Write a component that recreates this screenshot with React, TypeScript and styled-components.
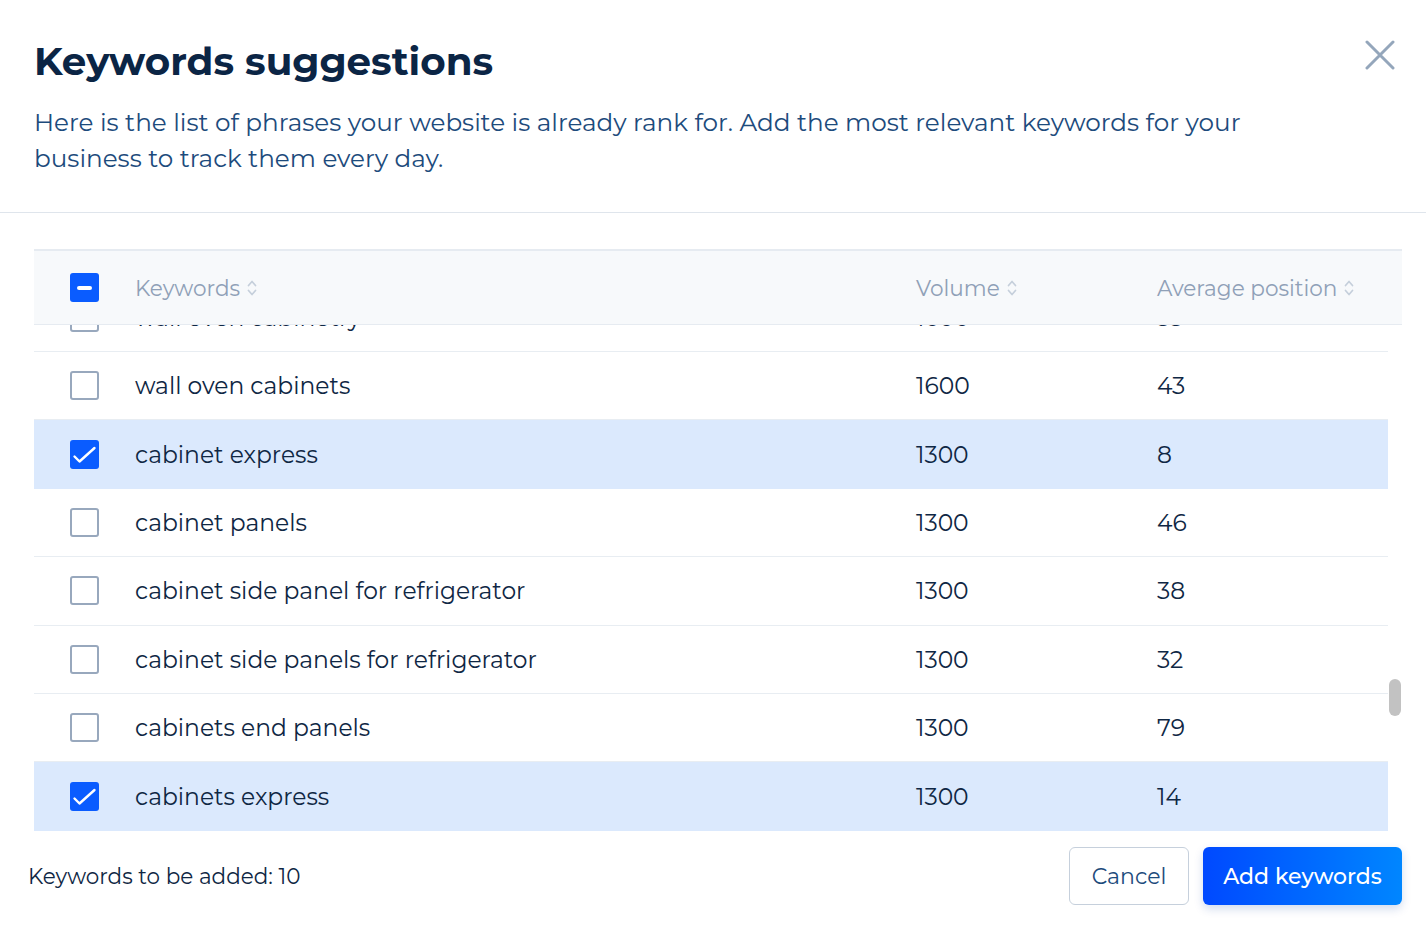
import React, { useLayoutEffect, useRef, useState } from 'react';
import styled, { createGlobalStyle } from 'styled-components';

type TRow = {
  keyword: string;
  volume: number;
  position: number;
  checked?: boolean;
};

const filler = [
  'kitchen cabinets',
  'cabinet doors',
  'kitchen cabinet doors',
  'bathroom cabinets',
  'cabinet hardware',
  'cabinet makers',
  'custom cabinets',
  'cabinet refacing',
  'cabinet knobs',
  'white kitchen cabinets',
];

const visibleRows: TRow[] = [
  { keyword: 'wall oven cabinetry', volume: 1600, position: 33 },
  { keyword: 'wall oven cabinets', volume: 1600, position: 43 },
  { keyword: 'cabinet express', volume: 1300, position: 8, checked: true },
  { keyword: 'cabinet panels', volume: 1300, position: 46 },
  { keyword: 'cabinet side panel for refrigerator', volume: 1300, position: 38 },
  { keyword: 'cabinet side panels for refrigerator', volume: 1300, position: 32 },
  { keyword: 'cabinets end panels', volume: 1300, position: 79 },
  { keyword: 'cabinets express', volume: 1300, position: 14, checked: true },
];

const BEFORE = 70;

const rows: TRow[] = [
  ...Array.from({ length: BEFORE }, (_, i) => ({
    keyword: `${filler[i % filler.length]} ${i + 1}`,
    volume: 9900 - i * 100,
    position: (i * 7) % 90 + 1,
    checked: i % 9 === 0,
  })),
  ...visibleRows,
  ...Array.from({ length: 23 }, (_, i) => ({
    keyword: `${filler[(i + 3) % filler.length]} ideas`,
    volume: 1000 - i * 20,
    position: (i * 11) % 90 + 1,
  })),
];

const SortIcon = () => (
  <svg width="10" height="20" viewBox="0 0 10 20" fill="none">
    <path d="M1.5 7.5 L5 3.5 L8.5 7.5" stroke="#c5cfdb" strokeWidth="1.7" strokeLinecap="round" strokeLinejoin="round" />
    <path d="M1.5 12.5 L5 16.5 L8.5 12.5" stroke="#c5cfdb" strokeWidth="1.7" strokeLinecap="round" strokeLinejoin="round" />
  </svg>
);

const Check = ({ checked, partial }: { checked?: boolean; partial?: boolean }) => (
  <CheckBox $on={checked || partial}>
    {checked && (
      <svg width="29" height="29" viewBox="0 0 29 29" fill="none">
        <path d="M4.5 16.5 L9.5 21.5 L24.5 8" stroke="#fff" strokeWidth="2.4" strokeLinecap="round" strokeLinejoin="round" />
      </svg>
    )}
    {partial && <Minus />}
  </CheckBox>
);

const App = () => {
  const bodyRef = useRef<HTMLDivElement>(null);
  const [thumb, setThumb] = useState({ top: 0, height: 0 });

  const updateThumb = () => {
    const body = bodyRef.current;
    if (!body) return;
    const track = body.clientHeight;
    const height = Math.max(24, (track * body.clientHeight) / body.scrollHeight);
    const top = (body.scrollTop / (body.scrollHeight - body.clientHeight)) * (track - height);
    setThumb({ top, height });
  };

  useLayoutEffect(() => {
    const body = bodyRef.current;
    if (!body) return;
    const row = body.children[BEFORE + 1] as HTMLElement;
    body.scrollTop = row.offsetTop - 27;
    updateThumb();
  }, []);

  return (
    <>
      <GlobalStyle />
      <Modal>
        <Header>
          <Title>Keywords suggestions</Title>
          <Description>
            Here is the list of phrases your website is already rank for. Add the most relevant keywords for your
            <br />
            business to track them every day.
          </Description>
          <CloseButton aria-label="close">
            <svg width="30" height="30" viewBox="0 0 30 30" fill="none">
              <path d="M2 2 L28 28 M28 2 L2 28" stroke="#94a6bb" strokeWidth="3" strokeLinecap="round" />
            </svg>
          </CloseButton>
        </Header>

        <Table>
          <HeadRow>
            <Check partial />
            <HeadCell>
              Keywords <SortIcon />
            </HeadCell>
            <HeadCell>
              Volume <SortIcon />
            </HeadCell>
            <HeadCell>
              Average position <SortIcon />
            </HeadCell>
          </HeadRow>
          <BodyWrap>
            <Body ref={bodyRef} onScroll={updateThumb}>
              {rows.map((r, i) => (
                <Row key={i} $selected={r.checked}>
                  <Check checked={r.checked} />
                  <Cell>{r.keyword}</Cell>
                  <Cell>{r.volume}</Cell>
                  <Cell>{r.position}</Cell>
                </Row>
              ))}
            </Body>
            <ScrollTrack>
              <ScrollThumb style={{ top: thumb.top, height: thumb.height }} />
            </ScrollTrack>
          </BodyWrap>
        </Table>

        <Footer>
          <Counter>Keywords to be added: 10</Counter>
          <Actions>
            <CancelButton>Cancel</CancelButton>
            <PrimaryButton>Add keywords</PrimaryButton>
          </Actions>
        </Footer>
      </Modal>
    </>
  );
};

export default App;

const GlobalStyle = createGlobalStyle`
  html, body {
    margin: 0;
    padding: 0;
    background: #fff;
  }
  body {
    font-family: 'Montserrat', 'DejaVu Sans', sans-serif;
    color: #0f2744;
  }
  * {
    box-sizing: border-box;
  }
`;

const Modal = styled.div`
  width: 1426px;
  height: 928px;
  display: flex;
  flex-direction: column;
  background: #fff;
  overflow: hidden;
`;

const Header = styled.div`
  position: relative;
  padding: 37px 34px 36px 34px;
  border-bottom: 1px solid #dfe5ec;
`;

const Title = styled.h1`
  margin: 0 0 19px;
  font-size: 38.8px;
  line-height: 48px;
  font-weight: 700;
  color: #0b2545;
`;

const Description = styled.p`
  margin: 0;
  font-size: 24.7px;
  line-height: 36px;
  color: #1d4b7c;
`;

const CloseButton = styled.button`
  position: absolute;
  top: 40px;
  right: 31px;
  padding: 0;
  border: none;
  background: none;
  display: flex;
  cursor: pointer;
`;

const Table = styled.div`
  margin: 36px 24px 0 34px;
  border-top: 2px solid #e6ebf1;
  display: flex;
  flex-direction: column;
`;

const columns = `
  display: grid;
  grid-template-columns: 65px 781px 241px 1fr;
  align-items: center;
  padding-left: 36px;
`;

const HeadRow = styled.div`
  ${columns}
  height: 74px;
  background: #f7f9fb;
  border-bottom: 1px solid #e6ebf1;
`;

const HeadCell = styled.div`
  display: flex;
  align-items: center;
  gap: 7px;
  font-size: 21.6px;
  color: #8fa0b7;
`;

const BodyWrap = styled.div`
  display: flex;
  height: 506px;
`;

const Body = styled.div`
  position: relative;
  flex: 1;
  overflow-y: scroll;
  scrollbar-width: none;

  &::-webkit-scrollbar {
    display: none;
  }
`;

const ScrollTrack = styled.div`
  position: relative;
  width: 14px;
  flex-shrink: 0;
  background: #fff;
`;

const ScrollThumb = styled.div`
  position: absolute;
  left: 1px;
  width: 12px;
  border-radius: 6px;
  background: #c2c2c2;
`;

const Row = styled.div<{ $selected?: boolean }>`
  ${columns}
  height: 68.43px;
  background: ${(p) => (p.$selected ? '#dbe9fd' : '#fff')};
  border-bottom: 1px solid ${(p) => (p.$selected ? '#dbe9fd' : '#e8edf2')};
`;

const Cell = styled.div`
  font-size: 23.4px;
  color: #0f2744;
  white-space: nowrap;
`;

const CheckBox = styled.div<{ $on?: boolean }>`
  width: 29px;
  height: 29px;
  border-radius: 3px;
  display: flex;
  align-items: center;
  justify-content: center;
  background: ${(p) => (p.$on ? '#0a5cff' : '#fff')};
  border: ${(p) => (p.$on ? 'none' : '2px solid #98a8bd')};
`;

const Minus = styled.div`
  width: 15px;
  height: 4px;
  border-radius: 2px;
  background: #fff;
`;

const Footer = styled.div`
  display: flex;
  align-items: center;
  justify-content: space-between;
  padding: 16px 24px 0 28px;
`;

const Counter = styled.div`
  font-size: 21.5px;
  color: #0f2744;
`;

const Actions = styled.div`
  display: flex;
  gap: 14px;
`;

const BaseButton = styled.button`
  height: 58px;
  border-radius: 6px;
  font-family: inherit;
  font-size: 22px;
  cursor: pointer;
`;

const CancelButton = styled(BaseButton)`
  width: 120px;
  background: #fff;
  border: 1px solid #c6d0dc;
  color: #1d4b7c;
`;

const PrimaryButton = styled(BaseButton)`
  width: 199px;
  border: none;
  color: #fff;
  font-weight: 500;
  background: linear-gradient(90deg, #0049ff 0%, #0086ff 100%);
  box-shadow: 0 4px 10px rgba(0, 60, 160, 0.18);
`;
